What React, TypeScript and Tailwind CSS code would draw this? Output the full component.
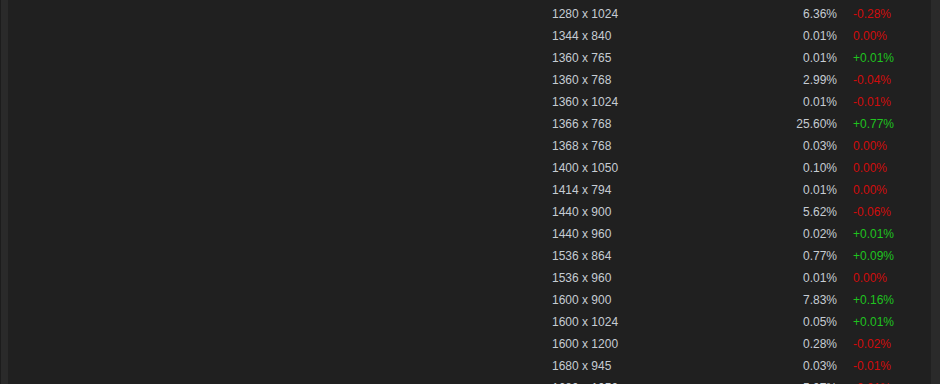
const rows: [string, string, string][] = [
  ['1280 x 1024', '6.36%', '-0.28%'],
  ['1344 x 840', '0.01%', '0.00%'],
  ['1360 x 765', '0.01%', '+0.01%'],
  ['1360 x 768', '2.99%', '-0.04%'],
  ['1360 x 1024', '0.01%', '-0.01%'],
  ['1366 x 768', '25.60%', '+0.77%'],
  ['1368 x 768', '0.03%', '0.00%'],
  ['1400 x 1050', '0.10%', '0.00%'],
  ['1414 x 794', '0.01%', '0.00%'],
  ['1440 x 900', '5.62%', '-0.06%'],
  ['1440 x 960', '0.02%', '+0.01%'],
  ['1536 x 864', '0.77%', '+0.09%'],
  ['1536 x 960', '0.01%', '0.00%'],
  ['1600 x 900', '7.83%', '+0.16%'],
  ['1600 x 1024', '0.05%', '+0.01%'],
  ['1600 x 1200', '0.28%', '-0.02%'],
  ['1680 x 945', '0.03%', '-0.01%'],
  ['1680 x 1050', '5.07%', '-0.01%'],
];

export default function App() {
  return (
    <div className="flex h-[384px] w-[940px] overflow-hidden bg-[#202020] font-['Liberation_Sans',Arial,sans-serif] text-[12px]">
      <div className="w-px bg-[#1c1c1c]" />
      <div className="w-[7px] bg-[#2a2a2a]" />
      <div className="flex-1 pl-[544px] pt-[3px]">
        {rows.map(([name, pct, change]) => (
          <div key={name} className="flex h-[22px] items-center leading-[22px]">
            <div className="w-[220px] text-[#c6ccd3]">{name}</div>
            <div className="w-[65px] text-right text-[#c6ccd3]">{pct}</div>
            <div
              className={
                'ml-[16px] ' +
                (change.startsWith('+') ? 'text-[#1fc31f]' : 'text-[#d00c0c]')
              }
            >
              {change}
            </div>
          </div>
        ))}
      </div>
      <div className="w-[9px] bg-[#2a2a2a]" />
    </div>
  );
}
